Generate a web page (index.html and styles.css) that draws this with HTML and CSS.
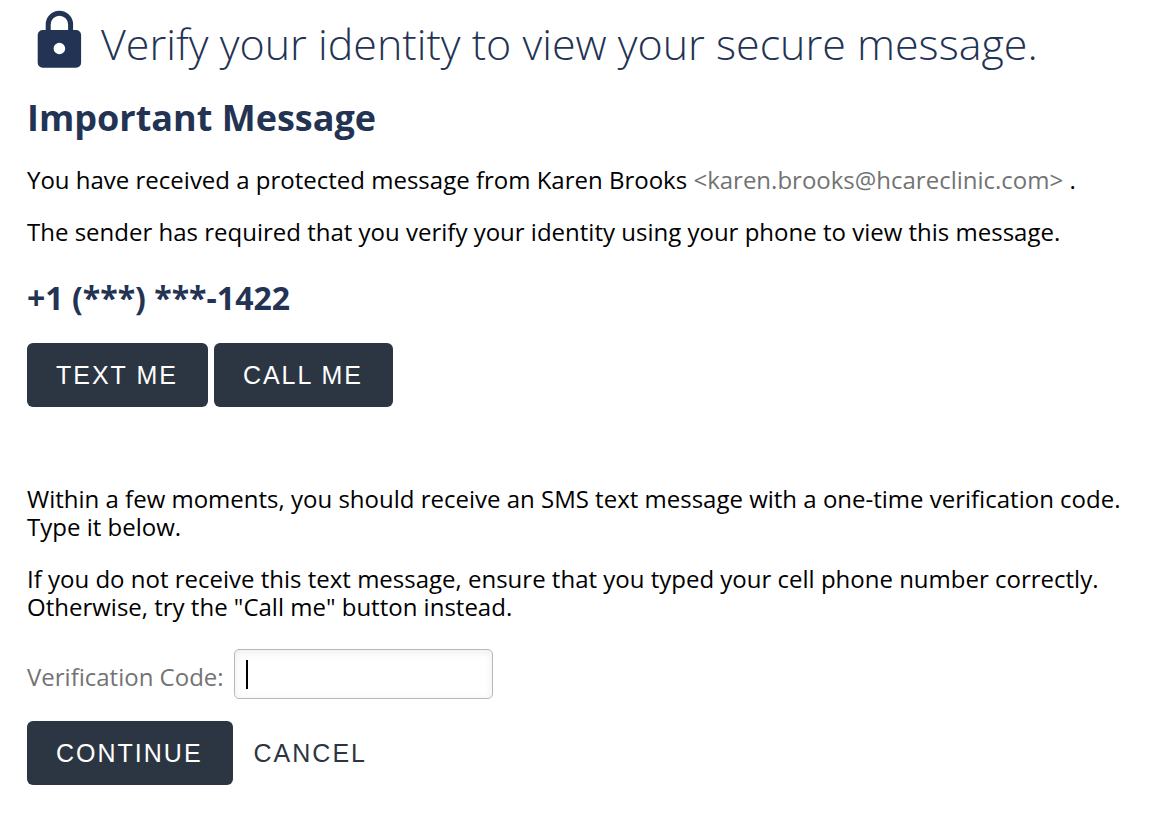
FILE: index.html
```html
<!DOCTYPE html>
<html lang="en">
<head>
<meta charset="utf-8">
<title>Verify your identity</title>
<link rel="stylesheet" href="styles.css">
</head>
<body>
<main class="page">
  <header class="masthead">
    <svg class="lock" viewBox="0 0 44 58" aria-hidden="true">
      <path d="M11.2 22V13.4a11.2 11.2 0 0 1 22.4 0V22" fill="none" stroke="currentColor" stroke-width="5"/>
      <path fill="currentColor" fill-rule="evenodd" d="M5.7 19h33.4a5 5 0 0 1 5 5v27.800a5 5 0 0 1-5 5H5.700a5 5 0 0 1-5-5V24a5 5 0 0 1 5-5zM22.400 31.700a5.800 5.800 0 1 0 0 11.600a5.800 5.800 0 0 0 0-11.600z"/>
    </svg>
    <h1 class="title">Verify your identity to view your secure message.</h1>
  </header>
  <h2 class="subject">Important Message</h2>
  <p class="text">You have received a protected message from Karen Brooks <span class="muted">&lt;karen.brooks@hcareclinic.com&gt;</span> .</p>
  <p class="text">The sender has required that you verify your identity using your phone to view this message.</p>
  <h3 class="phone">+1 (***) ***-1422</h3>
  <div class="methods">
    <button class="button" type="button">TEXT ME</button>
    <button class="button" type="button">CALL ME</button>
  </div>
  <p class="text">Within a few moments, you should receive an SMS text message with a one-time verification code. Type it below.</p>
  <p class="text">If you do not receive this text message, ensure that you typed your cell phone number correctly. Otherwise, try the "Call me" button instead.</p>
  <form class="form">
    <div class="field">
      <label class="label muted" for="code">Verification Code:</label>
      <div class="entry"><input class="input" id="code" type="text" autocomplete="one-time-code"><span class="caret"></span></div>
    </div>
    <div class="actions">
      <button class="button" type="submit">CONTINUE</button>
      <button class="button button-plain" type="button">CANCEL</button>
    </div>
  </form>
</main>
</body>
</html>
```
FILE: styles.css
```css
* { box-sizing: border-box; }
body {
  margin: 0;
  background: #fff;
  color: #000;
  font: 24px/28px "Open Sans", sans-serif;
}
.page { padding: 11px 27px 38px; }
.masthead {
  display: flex;
  gap: 20px;
  padding-left: 10px;
  color: #233354;
}
.lock { flex: none; width: 44px; height: 58px; overflow: visible; }
.title { margin: 3px 0 0; font-size: 43px; line-height: 60px; font-weight: 300; }
.subject { margin: 20px 0 24px; color: #233354; font-size: 36px; line-height: 48px; font-weight: 700; }
.text { margin: 0 0 24px; }
.muted { color: #737373; }
.phone { margin: 32px 0 25px; color: #233354; font-size: 32px; line-height: 40px; font-weight: 700; }
.methods { display: flex; gap: 6px; margin-bottom: 78px; }
.button {
  height: 64px;
  padding: 0 30px 0 29px;
  border: 0;
  border-radius: 6px;
  background: #2c3642;
  color: #fff;
  font: 25px/32px "Liberation Sans", Arial, sans-serif;
  letter-spacing: 2px;
}
.button-plain { padding: 0 21px; background: transparent; color: #2c3642; }
.field { display: flex; align-items: center; gap: 10px; margin: 28px 0 22px; }
.label { padding-top: 6px; }
.entry { position: relative; }
.input {
  display: block;
  width: 259px;
  height: 50px;
  padding: 8px 12px;
  border: 1px solid #b8b8b8;
  border-radius: 5px;
  box-shadow: inset 0 2px 8px rgba(0, 0, 0, 0.08);
  font: inherit;
  outline: 0;
}
.caret { position: absolute; left: 12px; top: 11px; width: 2px; height: 29px; background: #000; }
.actions { display: flex; }
```
